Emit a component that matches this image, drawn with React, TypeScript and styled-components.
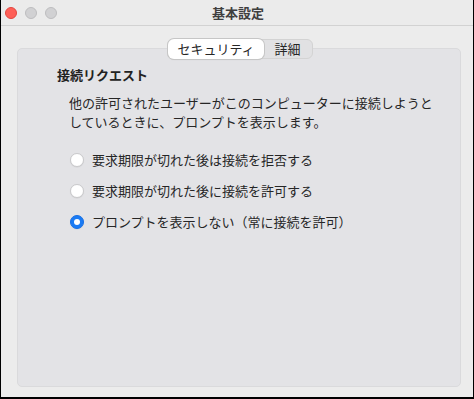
import React, { useState } from "react";
import styled, { createGlobalStyle } from "styled-components";

const Global = createGlobalStyle`
  html, body {
    margin: 0;
    padding: 0;
    background: #ececec;
  }
  body {
    font-family: "Noto Sans CJK JP", "Noto Sans", "Liberation Sans", sans-serif;
    color: #262626;
    -webkit-font-smoothing: antialiased;
  }
`;

const Window = styled.div`
  width: 474px;
  height: 399px;
  box-sizing: border-box;
  border: 1px solid #000;
  border-top: none;
  border-bottom-width: 2px;
  background: #ececec;
  display: flex;
  flex-direction: column;
  overflow: hidden;
`;

const TitleBar = styled.div`
  height: 25px;
  flex: none;
  position: relative;
  display: flex;
  align-items: center;
  justify-content: center;
  background: #ebebeb;
  border-bottom: 1px solid #d2d2d2;
`;

const Lights = styled.div`
  position: absolute;
  left: 4px;
  top: 7px;
  display: flex;
  gap: 8px;
`;

const Light = styled.span<{ $color: string; $edge: string }>`
  width: 12px;
  height: 12px;
  border-radius: 50%;
  box-sizing: border-box;
  background: ${(p) => p.$color};
  border: 0.5px solid ${(p) => p.$edge};
`;

const Title = styled.div`
  font-size: 13px;
  font-weight: 700;
  color: #3f3f3f;
  line-height: 16px;
  margin-top: 1px;
  margin-left: 2px;
`;

const Content = styled.div`
  flex: 1;
  display: flex;
  flex-direction: column;
  align-items: center;
  padding: 13px 12px 10px 16px;
`;

const Segmented = styled.div`
  display: flex;
  height: 20px;
  box-sizing: border-box;
  border: 1px solid #d3d3d3;
  border-radius: 6px;
  background: #e1e1e3;
  position: relative;
  z-index: 1;
  margin-left: 2px;
`;

const Segment = styled.button<{ $active?: boolean }>`
  font-family: inherit;
  font-size: 13px;
  line-height: 16px;
  color: #262626;
  border: none;
  margin: -1px 0;
  padding: 0 ${(p) => (p.$active ? "9px" : "11px")};
  border-radius: 6px;
  background: ${(p) => (p.$active ? "#ffffff" : "transparent")};
  box-shadow: ${(p) =>
    p.$active ? "0 0 0 1px #c6c6c6, 0 1px 1px rgba(0,0,0,0.12)" : "none"};
  cursor: default;
`;

const GroupBox = styled.div`
  align-self: stretch;
  flex: 1;
  margin-top: -11px;
  border: 1px solid #dadadc;
  border-radius: 5px;
  background: #e3e3e6;
  padding: 18px 20px 0 39px;
`;

const Heading = styled.div`
  font-size: 13px;
  font-weight: 700;
  line-height: 16px;
  color: #222;
`;

const Description = styled.p`
  margin: 10px 0 0 12px;
  font-size: 13px;
  line-height: 19px;
  color: #262626;
`;

const Options = styled.div`
  display: flex;
  flex-direction: column;
  gap: 15px;
  margin: 21px 0 0 13px;
`;

const OptionRow = styled.label`
  display: flex;
  align-items: center;
  gap: 8px;
  height: 16px;
  font-size: 13px;
  line-height: 16px;
  color: #262626;
  cursor: default;
`;

const RadioDot = styled.span<{ $checked: boolean }>`
  width: 14px;
  height: 14px;
  flex: none;
  box-sizing: border-box;
  border-radius: 50%;
  display: flex;
  align-items: center;
  justify-content: center;
  background: ${(p) => (p.$checked ? "#1b7bf4" : "#ffffff")};
  border: 1px solid ${(p) => (p.$checked ? "#1670e6" : "#c9c9cb")};
  box-shadow: 0 0.5px 1px rgba(0, 0, 0, 0.08);

  &::after {
    content: "";
    width: 6px;
    height: 6px;
    border-radius: 50%;
    background: #fff;
    display: ${(p) => (p.$checked ? "block" : "none")};
  }
`;

const options = [
  "要求期限が切れた後は接続を拒否する",
  "要求期限が切れた後に接続を許可する",
  "プロンプトを表示しない（常に接続を許可）",
];

export default function App() {
  const [selected, setSelected] = useState(2);
  const [tab, setTab] = useState(0);

  return (
    <>
      <Global />
      <Window>
        <TitleBar>
          <Lights>
            <Light $color="#fe5f57" $edge="#e2463f" />
            <Light $color="#d1d1d3" $edge="#bdbdbf" />
            <Light $color="#d1d1d3" $edge="#bdbdbf" />
          </Lights>
          <Title>基本設定</Title>
        </TitleBar>
        <Content>
          <Segmented>
            <Segment $active={tab === 0} onClick={() => setTab(0)}>
              セキュリティ
            </Segment>
            <Segment $active={tab === 1} onClick={() => setTab(1)}>
              詳細
            </Segment>
          </Segmented>
          <GroupBox>
            <Heading>接続リクエスト</Heading>
            <Description>
              他の許可されたユーザーがこのコンピューターに接続しようと
              <br />
              しているときに、プロンプトを表示します。
            </Description>
            <Options>
              {options.map((label, i) => (
                <OptionRow key={label} onClick={() => setSelected(i)}>
                  <RadioDot $checked={selected === i} />
                  {label}
                </OptionRow>
              ))}
            </Options>
          </GroupBox>
        </Content>
      </Window>
    </>
  );
}
